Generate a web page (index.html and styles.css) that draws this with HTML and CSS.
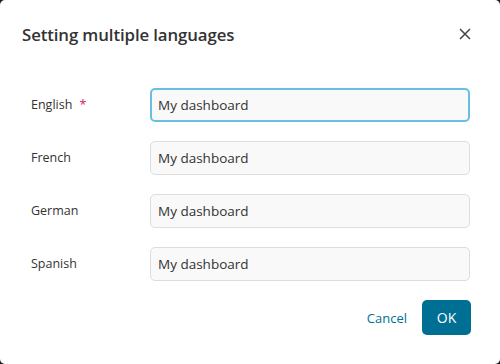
FILE: index.html
```html
<!DOCTYPE html>
<html lang="en">
<head>
<meta charset="utf-8">
<title>Setting multiple languages</title>
<link rel="stylesheet" href="styles.css">
</head>
<body>
<div class="dialog">
  <div class="header">
    <h1 class="title">Setting multiple languages</h1>
    <button class="close" aria-label="Close">
      <svg width="12" height="12" viewBox="0 0 12 12"><path d="M1 1L11 11M11 1L1 11" stroke="#444" stroke-width="1.5" fill="none"/></svg>
    </button>
  </div>
  <div class="form">
    <div class="row">
      <label class="label">English <span class="req">*</span></label>
      <input class="input focused" value="My dashboard">
    </div>
    <div class="row">
      <label class="label">French</label>
      <input class="input" value="My dashboard">
    </div>
    <div class="row">
      <label class="label">German</label>
      <input class="input" value="My dashboard">
    </div>
    <div class="row">
      <label class="label">Spanish</label>
      <input class="input" value="My dashboard">
    </div>
  </div>
  <div class="footer">
    <button class="cancel">Cancel</button>
    <button class="ok">OK</button>
  </div>
</div>
</body>
</html>
```
FILE: styles.css
```css
html, body {
  margin: 0;
  padding: 0;
  background: #1b1b1b;
}
body {
  font-family: "Open Sans", "Noto Sans", sans-serif;
  color: #333;
}
.dialog {
  width: 500px;
  height: 364px;
  background: #fff;
  border-radius: 5px;
  box-sizing: border-box;
  display: flex;
  flex-direction: column;
}
.header {
  display: flex;
  align-items: center;
  justify-content: space-between;
  padding: 22px 29px 0 22px;
  height: 24px;
}
.title {
  margin: 0;
  font-size: 16.8px;
  font-weight: 600;
  color: #333;
  letter-spacing: -0.1px;
}
.close {
  border: 0;
  background: none;
  padding: 0;
  width: 12px;
  height: 12px;
  display: flex;
  cursor: pointer;
}
.form {
  display: flex;
  flex-direction: column;
  gap: 20px;
  padding: 42px 30px 0 31px;
}
.row {
  display: flex;
  align-items: center;
  height: 33px;
}
.label {
  width: 119px;
  font-size: 12.5px;
  color: #333;
}
.req {
  color: #e0245e;
  margin-left: 4px;
}
.input {
  width: 320px;
  height: 34px;
  box-sizing: border-box;
  border: 1px solid #dddddd;
  border-radius: 5px;
  background: #f9f9f9;
  padding: 0 7px;
  font-family: inherit;
  font-size: 13.5px;
  color: #333;
  outline: none;
}
.input.focused {
  border: 2px solid #69bfe3;
  padding: 0 6px;
}
.footer {
  display: flex;
  justify-content: flex-end;
  align-items: center;
  gap: 15px;
  padding: 20px 29px 0 0;
}
.cancel {
  border: 0;
  background: none;
  padding: 0;
  font-family: inherit;
  font-size: 13px;
  color: #006f94;
  cursor: pointer;
}
.ok {
  border: 0;
  background: #006f94;
  color: #fff;
  font-family: inherit;
  font-size: 14px;
  width: 49px;
  height: 35px;
  border-radius: 5px;
  cursor: pointer;
}
```
